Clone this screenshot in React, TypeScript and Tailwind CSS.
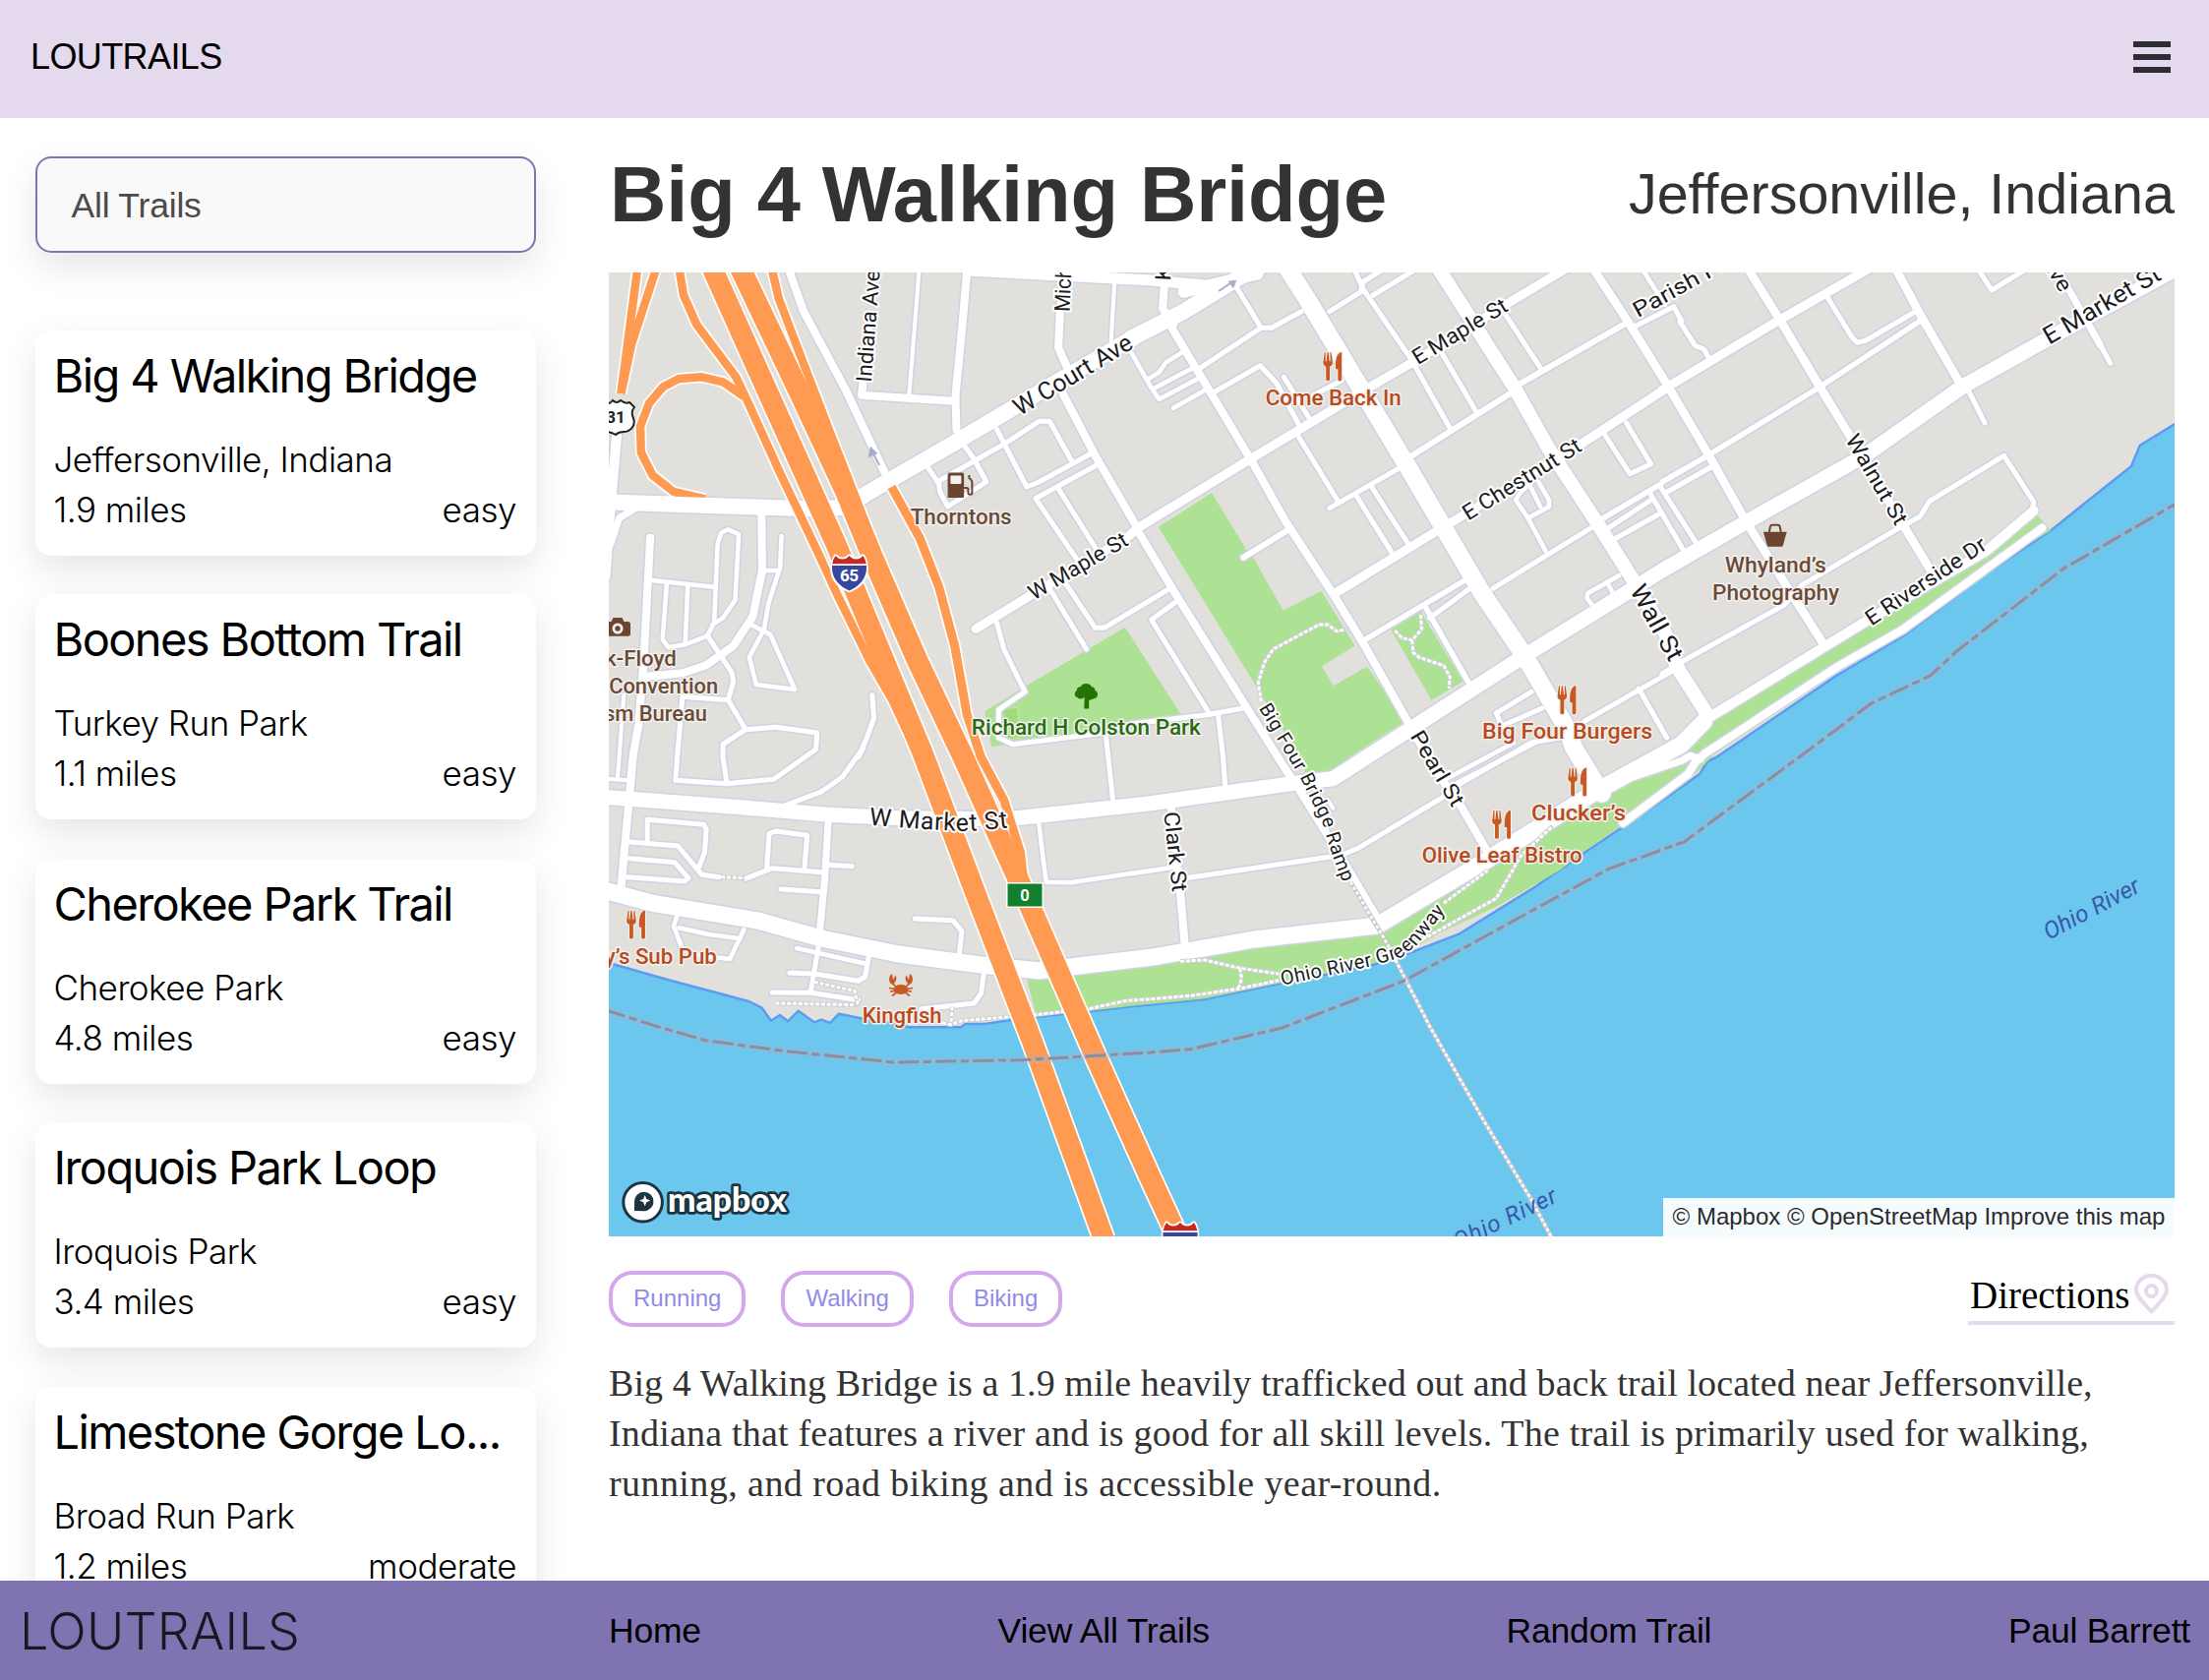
import React from "react";

/* ---------- Map geometry ----------
   Coordinates are stored per survey sheet (A-G); each sheet has its own
   origin and scale, and everything is projected to the map's own units. */
const SHEETS: Record<string, [number, number, number, number]> = {
  A: [610, 270, 2.8, 3],
  B: [1150, 270, 2.8, 3],
  C: [1690, 270, 2.82, 3],
  D: [610, 760, 2.8, 3],
  E: [1150, 760, 2.8, 3],
  F: [1690, 760, 2.82, 3],
  G: [680, 270, 3, 3],
};

type Pt = [number, number];

function project(src: string): Pt[] {
  let sheet = SHEETS.A;
  const out: Pt[] = [];
  for (const tok of src.trim().split(/\s+/)) {
    if (SHEETS[tok]) {
      sheet = SHEETS[tok];
      continue;
    }
    const [x, y] = tok.split(",").map(Number);
    out.push([sheet[0] + x / sheet[2], sheet[1] + y / sheet[3]]);
  }
  return out;
}

const toPath = (src: string) =>
  "M" + project(src).map((p) => p[0].toFixed(1) + " " + p[1].toFixed(1)).join("L");

const SHORE =
  "C 1475,480 1370,548 1345,612 1200,735 1115,808 900,960 830,1020 690,1130 500,1250 300,1395 155,1500 F 130,42 108,80 0,162 E 1285,325 1150,425 935,568 790,628 690,662 560,690 420,720 210,768 0,790 D 1395,805 1240,822 1165,832 1100,842 1040,843 1028,853 880,853 840,843 740,825 680,812 655,840 630,830 610,838 565,803 535,835 512,816 487,833 460,793 425,775 340,750 200,710 35,660 15,652";

const PARKS = [
  "A 1095,1360 1210,1285 1495,1103 1568,1225 B 145,1375 A 1440,1420 1175,1458 1115,1467",
  "B 78,797 230,693 330,870 350,895 433,1052 542,992 637,1160 543,1222 576,1282 672,1223 780,1390 620,1500 E 575,80 500,90 B 480,1500",
  "B 740,1110 825,1055 945,1268 855,1325",
  "C 1072,757 1115,808 1050,850 830,1010 690,1115 500,1240 150,1490 F 100,75 0,155 E 1285,320 1220,375 1040,485 880,565 790,622 690,658 560,688 210,766 0,788 D 1395,803 1240,808 1215,707 1568,650 E 0,650 700,555 1010,360 1350,150 1568,-10 C 0,1490 160,1375",
];

const ROADS: [number, string][] = [
  [4.5, "A 145,960 325,980"],
  [4.5, "A 190,970 178,1140 195,1165 245,1155 305,1130 325,1090 335,850 345,815 365,805 395,820 385,1020 350,1075 320,1095"],
  [4.5, "A 250,975 243,1150"],
  [4.5, "A 517,825 513,920 480,1030 467,1110 425,1195 445,1278 555,1293 485,1125 430,1095"],
  [4.5, "A 470,930 510,930"],
  [5, "A 310,1135 375,1240 380,1270 365,1325 235,1315 220,1500 D 215,100 360,110 495,97 615,5 A 618,1425 500,1408 415,1415 350,1460 350,1500 D 360,100"],
  [5, "A 365,1325 415,1415"],
  [5, "A 775,1310 780,1380 760,1440 735,1500 D 750,0 690,90 630,135 530,175"],
  [4, "A 68,1310 55,1500 D 50,95"],
  [4, "D 15,95 80,100"],
  [5, "D 135,290 135,220 295,235 303,250 298,320 280,370"],
  [5, "D 85,288 222,300 290,388 340,395"],
  [5, "D 85,338 212,350 252,398 240,408 80,395"],
  [5, "D 415,400 490,368 630,380"],
  [5, "D 475,370 482,262 500,255 590,268 582,370"],
  [5, "D 650,358 718,362"],
  [5, "D 515,432 630,440"],
  [4.5, "D 220,510 210,545 235,615 270,632 370,645 410,555"],
  [4.5, "D 225,550 310,570 400,583"],
  [5, "D 625,590 600,745"],
  [4.5, "D 560,612 760,660"],
  [5, "D 765,640 755,700 735,712 610,690 540,687"],
  [5, "D 490,747 600,748 735,770"],
  [5, "D 897,522 1005,527 1030,560 1022,640"],
  [5, "D 1092,695 1085,750 1065,780 915,797"],
  [4.5, "D 1250,235 1270,410 1340,412 1568,375 E 0,385 120,365"],
  [5, "E 165,397 600,328 650,305 890,150 930,108 1150,-15"],
  [4.5, "E 890,100 1090,-15"],
  [5, "E 930,115 B 1140,1455 1220,1440"],
  [4, "E 560,160 575,185"],
  [5, "B 1140,1300 1040,1365 1055,1405 1170,1350"],
  [5, "B 1290,1390 1568,1220 C 0,1245 70,1200 350,1035 400,975 680,800 740,765 765,720 980,580 1065,720 1062,745"],
  [5, "B 1445,1290 1525,1440"],
  [5, "A 1440,1430 1447,1500 D 1460,155"],
  [5, "B 248,1370 262,1500 E 268,120"],
  [5, "A 1130,1090 1150,1170 1210,1300 1135,1355 1135,1440 1175,1460 1440,1425 B 0,1398 215,1370 320,1350"],
  [5, "A 1280,985 1385,1170"],
  [5, "A 1320,960 1410,1105 1435,1105 1568,1020 B 110,985"],
  [5, "B 135,1020 58,1080 225,1370"],
  [5, "A 1130,500 1215,675 1250,660 1395,575"],
  [5, "A 960,660 1150,545 1250,475 1280,475 1345,600"],
  [5, "A 930,610 965,665 968,690 990,735 1100,660 1065,590 1035,545"],
  [5, "A 1360,900 1240,710 1420,605"],
  [5, "A 1305,680 1410,860"],
  [4, "A 908,20 895,200 880,395"],
  [4, "A 1465,50 1455,235"],
  [4.5, "A 1510,260 1568,370 B 80,408 190,345"],
  [4.5, "B 50,345 80,325 100,295 145,265"],
  [4.5, "B 65,375 180,310"],
  [4.5, "B 120,435 210,380"],
  [5, "B 300,65 370,190 400,190 485,140"],
  [5, "B 370,190 200,310"],
  [5, "B 230,390 368,305 415,360 480,490"],
  [5, "B 435,340 510,470"],
  [5, "B 635,10 660,70 800,290 910,500"],
  [5, "B 565,140 655,80 660,50 720,10"],
  [5, "B 690,90 820,5"],
  [5, "B 870,240 985,450"],
  [5, "B 1060,140 1170,320"],
  [5, "B 600,350 520,395"],
  [6, "B 1100,365 1410,175"],
  [6, "B 800,580 910,505 1080,390"],
  [5, "B 1435,185 1545,125 1568,170 C 50,170 95,245 120,255 135,285"],
  [4.5, "B 1455,10 1520,120"],
  [5, "B 470,510 590,720"],
  [5, "B 565,740 760,620"],
  [5, "B 640,700 745,880"],
  [5, "B 685,675 790,850"],
  [6, "B 320,890 450,805"],
  [4.5, "B 1140,660 1110,690 1095,715 1130,770 1180,870"],
  [4.5, "B 1130,770 1190,735 1190,715 1160,660"],
  [4.5, "B 1135,670 1165,735"],
  [5, "B 1030,985 1310,800"],
  [5, "B 1345,510 1420,635 1480,605 1410,480"],
  [5.5, "B 1345,770 1510,665 C 0,660 130,580 445,375 745,165"],
  [5, "B 1360,800 1480,715"],
  [5, "B 1375,835 1500,760"],
  [5, "B 1475,690 C 65,875"],
  [5, "B 1510,680 C 100,850"],
  [5, "C 15,690 140,615"],
  [5, "C 470,90 545,220 560,235 585,228 735,135"],
  [5, "C 905,10 945,75 1045,10"],
  [5, "C 1255,240 1285,298"],
  [5, "C 880,385 925,480"],
  [5.5, "B 660,1145 950,960"],
  [5.5, "B 840,1045 960,1270"],
  [5, "B 850,1075 965,985"],
  [4.5, "B 1390,945 1300,1000 1298,1015 1320,1045"],
  [4.5, "B 1355,965 1375,1005"],
  [7, "D 650,225 640,400 625,570"],
  [8, "A 460,750 462,930 435,1070 380,1160 300,1220 235,1243 120,1255"],
  [8, "A 143,830 125,1200 110,1400 D 95,20 60,430"],
  [10, "A 50,490 28,760 15,950"],
  [7, "A 100,740 55,770 30,850"],
  [8, "A 540,20 580,140 700,380 810,630"],
  [8, "A 765,200 745,395 1005,413"],
  [8, "A 1045,20 1030,200 1012,400 1015,500"],
  [8, "A 1320,60 1310,140 1305,250 1330,310"],
  [8, "B 95,60 90,130 120,180"],
  [8, "A 1320,395 1410,580 1530,800 B 20,810 120,990 330,1350 430,1520 E 480,130 590,320 700,520"],
  [8, "B 110,180 200,340 340,590 440,780 580,1010 660,1150 790,1395 E 860,60 940,180 1010,310"],
  [8, "E 115,190 140,440 153,600"],
  [9, "A 1070,1108 1220,1010 1500,830 B 20,800 340,590 480,500 680,370 810,290 1080,110 1260,-5"],
  [9, "B 580,1000 870,810 980,740 1280,545 1530,370 C 0,380 330,170 600,5"],
  [8.5, "B 1310,0 1420,180 1530,370 C 140,590 240,780 370,1000 460,1150"],
  [8.5, "C 240,0 340,170 455,375 550,540 690,790 770,930"],
  [8.5, "C 665,0 740,150 860,370"],
  [7, "C 1130,10 1170,80 1255,240"],
  [8, "C 1090,800 690,1110 500,1225 120,1490 F 95,45 75,80 0,140 E 1400,230"],
  [7, "E 1430,90 1568,40 F 80,25 110,35"],
  [10, "C 140,1375 600,1075 930,870 1065,748"],
  [11, "A 1045,15 1568,45 B 210,60"],
  [14, "B 870,0 1090,370 1190,560 1330,790 1430,960 1520,1120 C 40,1220 130,1370"],
  [18, "B 440,0 500,100 640,350 780,600 890,800 1000,1000 1120,1190 1240,1410 E 1260,0 1340,140"],
  [16, "A 50,722 400,735 600,742 700,738 760,695 1010,540 1280,368 1520,220 B 0,222 150,140 310,35 390,-10"],
  [12, "B 150,80 360,25"],
  [15, "D 0,150 150,162 400,182 650,205 850,215 1160,218 1568,170 E 270,138 470,108 575,95 B 800,1410 1120,1190 1430,985 C 0,930 245,780 580,580 860,370 1120,215 1500,-5"],
  [17, "D 0,432 150,475 450,528 630,582 850,630 1100,665 1250,680 1568,640 E 350,585 700,543 1010,345 1330,130 1568,-10 C 120,1390"],
];

const HIGHWAYS: [number, string][] = [
  [8.5, "A 108,0 60,390"],
  [8.5, "A 163,0 90,240 60,390"],
  [8.5, "G 30,0 45,90 85,180 205,340 250,435 338,630 448,860 512,1000 610,1200 A 830,1320 900,1480"],
  [8.5, "A 410,400 350,355 290,340 225,345 180,370 140,420 115,490 117,570 150,640 210,690 300,712"],
  [8.5, "G 312,0 335,100 400,270 460,425 500,530 563,690 600,790"],
  [9, "A 830,675 910,830 965,980 1010,1160 1045,1370 1085,1500 D 1150,160 1197,320 1205,400"],
  [21, "G 129,0 138,20 510,850 655,1200 A 920,1490 D 1071,450 1232,900 1435,1500"],
  [21.5, "G 215,0 224,20 405,400 540,690 622,890 756,1200 A 1030,1490 D 1190,400 1410,940 E 56,1315 140,1510"],
];

const FOOTPATHS = [
  "D 500,780 735,785",
  "D 610,715 725,742 735,790",
  "D 1003,790 1000,840",
  "D 975,840 1000,845 1030,833 1240,815 1400,795 1500,772 1568,767 E 170,757 310,735 420,710",
  "E 140,652 210,648 310,673 420,690",
  "E 310,673 315,705 305,735",
  "E 890,475 1015,375",
  "E 830,585 1040,460 1110,330 1200,240",
  "B 370,1330 362,1270 380,1210 405,1170 535,1095 560,1095 585,1115 610,1110",
  "B 825,1065 827,1110 800,1143 770,1135 750,1112",
  "B 800,1143 803,1180 820,1195 890,1220 908,1255 905,1290",
  "D 345,395 415,398",
];

const BRIDGE = "E 625,410 730,600 850,850 1000,1130 1140,1380 1200,1500";

const BORDER =
  "D 15,800 160,850 300,893 520,925 835,960 1200,953 1568,930 E 170,920 430,855 780,710 1120,510 1360,370 1568,290 F 60,290 430,0 C 600,1335 770,1250 840,1180 1150,925 1480,722";

/* ---------- Map labels ---------- */
const STREET_LABELS: [string, string, number][] = [
  ["Indiana Ave", "A 772,357 797,15", 22],
  ["Mich", "A 1337,142 1343,6", 22],
  ["K", "B 112,47 114,3", 22],
  ["W Court Ave", "A 1195,460 1522,250", 25],
  ["W Maple St", "A 1235,1022 1508,850", 22],
  ["E Maple St", "B 816,304 1077,135", 22],
  ["E Chestnut St", "B 960,779 1287,562", 22],
  ["Parish Pl", "B 1443,160 C 185,10", 22],
  ["E Market St", "C 1110,242 1435,40", 25],
  ["Ave", "C 1085,-15 1142,85", 22],
  ["Walnut St", "C 524,530 670,797", 22],
  ["Wall St", "B 1419,990 1533,1212", 25],
  ["Pearl St", "B 793,1435 E 915,185", 22],
  ["Clark St", "E 93,198 118,442", 22],
  ["Big Four Bridge Ramp", "B 363,1350 E 425,-10 485,100 545,230 570,320 603,412", 19.5],
  ["Ohio River Greenway", "E 430,725 680,668 770,640 820,595 895,498", 20],
  ["W Market St", "D 766,236 920,249 1030,255 1090,252 1162,244", 25],
  ["E Riverside Dr", "C 600,1100 935,862", 22],
];

const WATER_LABELS: [string, string][] = [
  ["Ohio River", "F 1108,588 1375,438"],
  ["Ohio River", "E 930,1532 1217,1385"],
];

const BROWN = "#6b4b38";
const RUST = "#b84a1d";
const GREEN = "#2a6b14";

// text, anchor point (centre of the baseline), width, colour
const POI_LABELS: [string, string, number, string][] = [
  ["Come Back In", "B 576,425", 138, RUST],
  ["Thorntons", "A 1028,789", 103, BROWN],
  ["Richard H Colston Park", "A 1384,1432", 233, GREEN],
  ["Big Four Burgers", "B 1242,1442", 173, RUST],
  ["Clucker’s", "E 1274,222", 96, RUST],
  ["Olive Leaf Bistro", "E 1056,352", 163, RUST],
  ["Whyland’s", "C 325,936", 103, BROWN],
  ["Photography", "C 326,1021", 129, BROWN],
  ["k-Floyd", "A 116,1221", 73, BROWN],
  ["Convention", "A 181,1305", 111, BROWN],
  ["sm Bureau", "A 158,1390", 105, BROWN],
  ["y’s Sub Pub", "D 173,659", 114, RUST],
  ["Kingfish", "D 860,841", 81, RUST],
];

function pathLength(pts: Pt[]) {
  let len = 0;
  for (let i = 1; i < pts.length; i++) {
    len += Math.hypot(pts[i][0] - pts[i - 1][0], pts[i][1] - pts[i - 1][1]);
  }
  return len;
}

function StreetLabel({ text, src, size, id }: { text: string; src: string; size: number; id: string }) {
  const pts = project(src);
  const len = pathLength(pts);
  const halo = { stroke: "#ffffff", strokeWidth: 4, strokeLinejoin: "round" as const, paintOrder: "stroke" };
  if (pts.length === 2) {
    const angle = (Math.atan2(pts[1][1] - pts[0][1], pts[1][0] - pts[0][0]) * 180) / Math.PI;
    return (
      <text
        transform={`translate(${pts[0][0]} ${pts[0][1]}) rotate(${angle})`}
        fontSize={size}
        textLength={len}
        lengthAdjust="spacingAndGlyphs"
        fill="#1d1d1f"
        {...halo}
      >
        {text}
      </text>
    );
  }
  const extra = 1.12;
  const last = pts[pts.length - 1];
  const prev = pts[pts.length - 2];
  const tail: Pt = [prev[0] + (last[0] - prev[0]) * extra, prev[1] + (last[1] - prev[1]) * extra];
  const d = "M" + [...pts.slice(0, -1), tail].map((p) => p.join(" ")).join("L");
  return (
    <>
      <path id={id} d={d} fill="none" />
      <text fontSize={size} fill="#1d1d1f" textLength={len} {...halo}>
        <textPath href={"#" + id}>{text}</textPath>
      </text>
    </>
  );
}

function Restaurant({ at }: { at: string }) {
  const [x, y] = project(at)[0];
  return (
    <g transform={`translate(${x} ${y})`} fill="#c75a24" stroke="#f4efe9" strokeWidth="2" strokeLinejoin="round" style={{ paintOrder: "stroke" }}>
      <path d="M0 10.5 1.4 0h1l-.1 9h1L4.2 0h1.2l.9 9h1L7.2 0h1l1.4 10.5c0 2-1.2 3.2-2.9 3.9V27.500q0 1.300-1.900 1.300t-1.900-1.300V14.400C1.200 13.700 0 12.500 0 10.500z" />
      <path d="M18.800 0v27.300q0 1.500-1.900 1.500t-1.900-1.500V17h-2.300C12.300 8 13.600 0 18.800 0z" />
    </g>
  );
}

function Interstate({ x, y, label }: { x: number; y: number; label: string }) {
  const shield = "M4 0q3 3.500 7 3.500 4 0 7-3.500 3 3.500 7 3.500 4 0 7-3.500 3.500 5 3.500 13C35.500 25 27 32 18 35.500 9 32 .5 25 .5 13 .5 8 2 4 4 0z";
  return (
    <g transform={`translate(${x} ${y})`}>
      <path d={shield} fill="#fff" stroke="#fff" strokeWidth="3.500" strokeLinejoin="round" />
      <path d="M4 0q3 3.500 7 3.500 4 0 7-3.500 3 3.500 7 3.500 4 0 7-3.500 2.500 3.500 3.300 8.300H.7Q1.500 3.500 4 0z" fill="#c42a24" />
      <path d="M.5 10h35c1 13-8 21.500-17.500 25.500C8.500 31.500-.5 23 .5 10z" fill="#3747a0" />
      <text x="18" y="26" fontSize="17" fontWeight="700" textAnchor="middle" fill="#fff" textLength="19">
        {label}
      </text>
    </g>
  );
}

function TrailMap() {
  const shorePath = toPath(SHORE);
  return (
    <svg viewBox="619 277 1592 980" className="block h-[980px] w-[1592px]" fontFamily="Roboto, sans-serif">
      <rect x="619" y="277" width="1592" height="980" fill="#6bc7ee" />
      <path d={shorePath + "L610 260L2220 260Z"} fill="#e1e0dc" stroke="#5c9cf2" strokeWidth="2.500" strokeLinejoin="round" />
      {PARKS.map((p) => (
        <path key={p} d={toPath(p) + "Z"} fill="#ade294" />
      ))}
      <path d={toPath("A 1145,1352 1190,1347 1195,1440 1160,1445") + "Z"} fill="#9fdb80" stroke="#c3e39a" strokeWidth="1.500" />

      <g fill="none" strokeLinecap="round" strokeLinejoin="round">
        {ROADS.map(([w, p]) => (
          <path key={p} d={toPath(p)} stroke="#d0d3e4" strokeWidth={w + 3.2} />
        ))}
        {ROADS.map(([w, p]) => (
          <path key={p} d={toPath(p)} stroke="#ffffff" strokeWidth={w} />
        ))}
        {FOOTPATHS.map((p) => (
          <g key={p} strokeLinecap="butt">
            <path d={toPath(p)} stroke="#cfd0d4" strokeWidth="4.500" />
            <path d={toPath(p)} stroke="#ffffff" strokeWidth="2.800" strokeDasharray="4 1.800" />
          </g>
        ))}
        <g strokeLinecap="butt">
          {HIGHWAYS.map(([w, p]) => (
            <path key={p} d={toPath(p)} stroke="#ffffff" strokeWidth={w + 3.4} />
          ))}
          {HIGHWAYS.map(([w, p]) => (
            <path key={p} d={toPath(p)} stroke="#ff9a52" strokeWidth={w} />
          ))}
          {/* the surface street passes over the end of the loop ramp */}
          <path d={toPath("A 190,727 330,732")} stroke="#ffffff" strokeWidth="15.500" />
          <path d={toPath(BRIDGE)} stroke="#c9c5cf" strokeWidth="4.500" />
          <path d={toPath(BRIDGE)} stroke="#ffffff" strokeWidth="2.600" strokeDasharray="3.500 2.200" />
          <path d={toPath(BORDER)} stroke="#a5b4cc" strokeOpacity="0.350" strokeWidth="8" />
          <path d={toPath(BORDER)} stroke="#8d8d9f" strokeWidth="3" strokeDasharray="21 4.500 8 4.500" />
        </g>
      </g>

      {/* one-way arrows */}
      <g fill="#a7adc6" stroke="#a7adc6">
        <path d="M894 473l-7-14" strokeWidth="2" />
        <path d="M885 454l-2 11 9-4z" strokeWidth="0.500" />
        <path d="M1239 296l12-8" strokeWidth="2" />
        <path d="M1257 285l-8 1 5 7z" strokeWidth="0.500" />
      </g>

      <g fontWeight="400">
        {STREET_LABELS.map(([text, src, size], i) => (
          <StreetLabel key={text + i} text={text} src={src} size={size} id={"street-" + i} />
        ))}
      </g>

      {WATER_LABELS.map(([text, src]) => {
        const [a, b] = project(src);
        const angle = (Math.atan2(b[1] - a[1], b[0] - a[0]) * 180) / Math.PI;
        return (
          <text
            key={src}
            transform={`translate(${a[0]} ${a[1]}) rotate(${angle})`}
            fontSize="24"
            fontStyle="italic"
            fill="#3a57a9"
            textLength={Math.hypot(b[0] - a[0], b[1] - a[1])}
          >
            {text}
          </text>
        );
      })}

      {/* US route 31 */}
      <g transform="translate(610 406)">
        <path
          d="M4 4q5 2 9-3 4 4 8 0 5 4 9 2l5 5c-4 5-2 8-.5 13C36 28 30 33 24 33c-4 0-6 1-8 3-3-2-5-3-9-3-7-1-11-8-8-15 2-5 2-8-2-11z"
          fill="#fff"
          stroke="#222"
          strokeWidth="2"
        />
        <text x="16" y="24" fontSize="17" fontWeight="700" textAnchor="middle" fill="#222">
          31
        </text>
      </g>
      <Interstate x={845.5} y={565} label="65" />
      <Interstate x={1182} y={1243} label="65" />
      <g>
        <rect x="1023" y="897" width="38" height="26" fill="#fff" />
        <rect x="1024.500" y="898.500" width="35" height="23" fill="#12802f" />
        <text x="1042" y="915.500" fontSize="16.500" fontWeight="700" textAnchor="middle" fill="#fff" textLength="8">
          0
        </text>
      </g>

      {POI_LABELS.map(([text, src, width, color]) => {
        const [x, y] = project(src)[0];
        return (
          <text
            key={text}
            x={x - width / 2}
            y={y}
            fontSize="22"
            fontWeight="500"
            fill={color}
            stroke="#f3f1ee"
            strokeWidth="3"
            strokeLinejoin="round"
            paintOrder="stroke"
            textLength={width}
            lengthAdjust="spacingAndGlyphs"
          >
            {text}
          </text>
        );
      })}

      <Restaurant at="B 547,265" />
      <Restaurant at="B 1214,1282" />
      <Restaurant at="E 1244,62" />
      <Restaurant at="E 1028,192" />
      <Restaurant at="D 76,497" />

      {/* fuel pump */}
      <g transform="translate(963.600 480.500)">
        <path d="M2 0h12.500q2 0 2 2v23.500H0V2q0-2 2-2z" fill="#6b4531" />
        <rect x="2.800" y="3" width="11" height="8.500" rx="1" fill="#f3f1ee" />
        <path d="M16.500 15.500h2.800q1.500 0 1.500 1.800v3.200q0 1.800 2 1.800t2-1.800V10q0-2.500-3-4.500V2.500" fill="none" stroke="#6b4531" strokeWidth="2" />
      </g>
      {/* camera */}
      <g transform="translate(614 628)">
        <path d="M2 4h5.500l2-4h9l2 4h4q2.500 0 2.500 2.500v9.800q0 2.500-2.500 2.500H0V6z" fill="#6b4531" />
        <circle cx="14" cy="11" r="5.500" fill="#f3f1ee" />
        <circle cx="14" cy="11" r="2.700" fill="#6b4531" />
      </g>
      {/* basket */}
      <g transform="translate(1792.800 532.700)">
        <path d="M0 8h24l-1.500 5-2.300 8.500q-.4 1.500-2 1.500H5.800q-1.600 0-2-1.500L1.500 13z" fill="#6b4531" />
        <path d="M6 8l1.200-5.500Q7.500 1 9 1h6q1.500 0 1.800 1.500L18 8" fill="none" stroke="#6b4531" strokeWidth="2" />
      </g>
      {/* tree */}
      <g transform="translate(1092.800 695)" fill="#237404">
        <path d="M11.500 0q4 0 5.500 3.200 3.500.3 3.500 3.500 3 1.500 2.700 4.500-.4 3.800-4.700 4.300-3 2-6-.3L9.500 14Q6 17 2.500 14-1 12.500.3 9 1 7.500 2 7q0-3.500 4-3.800Q7.500 0 11.500 0z" />
        <path d="M10 12h3.500l.5 3 3-2 .8 1-3.500 3.500.2 8H9.500z" />
      </g>
      {/* crab */}
      <g transform="translate(903.500 990)" stroke="#c75a24" fill="none" strokeWidth="1.600">
        <ellipse cx="12.500" cy="16" rx="7.500" ry="5" fill="#c75a24" stroke="none" />
        <path d="M7.500 13 3.500 9.500M17.500 13l4-3.500M6.500 15.500l-6-1M6.500 17.500l-5 .5M8 19l-4.500 3.500M18.500 15.500l6-1M18.500 17.500l5 .5M17 19l4.500 3.500" />
        <path d="M3.500 0Q-.5 3 .8 7.500 1.800 11 5.800 11.500L6 9q3-2.500 1.200-7.500L4.500 6z" fill="#c75a24" stroke="none" />
        <path d="M21.500 0q4 3 2.700 7.500-1 3.500-5 4L19 9q-3-2.500-1.200-7.500L20.500 6z" fill="#c75a24" stroke="none" />
      </g>

      {/* Mapbox wordmark */}
      <g>
        <circle cx="653.600" cy="1222.200" r="19.800" fill="#fff" stroke="#1c3540" strokeWidth="3" />
        <path d="M645 1231v-9a9.800 9.800 0 0 1 9.800-10.200 9.600 9.600 0 0 1 9.600 9.600 9.800 9.800 0 0 1-10.400 9.800z" fill="#1c3540" />
        <path d="M655.700 1215l1.600 4 4 1.600-4 1.600-1.600 4-1.600-4-4-1.600 4-1.600z" fill="#fff" />
        <text
          x="679"
          y="1231.500"
          fontFamily="Lato, sans-serif"
          fontWeight="900"
          fontSize="34"
          fill="#fff"
          stroke="#1c3540"
          strokeWidth="5.500"
          strokeLinejoin="round"
          paintOrder="stroke"
          textLength="121"
          lengthAdjust="spacingAndGlyphs"
        >
          mapbox
        </text>
      </g>
    </svg>
  );
}

/* ---------- Sidebar ---------- */
const TRAILS = [
  { name: "Big 4 Walking Bridge", place: "Jeffersonville, Indiana", miles: "1.9 miles", level: "easy" },
  { name: "Boones Bottom Trail", place: "Turkey Run Park", miles: "1.1 miles", level: "easy" },
  { name: "Cherokee Park Trail", place: "Cherokee Park", miles: "4.8 miles", level: "easy" },
  { name: "Iroquois Park Loop", place: "Iroquois Park", miles: "3.4 miles", level: "easy" },
  { name: "Limestone Gorge Lo...", place: "Broad Run Park", miles: "1.2 miles", level: "moderate" },
];

function TrailCard({ name, place, miles, level }: (typeof TRAILS)[number]) {
  return (
    <article className="h-[229px] shrink-0 rounded-2xl bg-white pl-[19px] pr-5 shadow-[0_14px_36px_rgba(0,0,0,0.1)]">
      <h2 className="whitespace-nowrap pt-[16px] font-[Inter,sans-serif] text-[47px] leading-[60px] tracking-[-1.6px] text-black">
        {name}
      </h2>
      <div className="mt-[30px] font-[Inter,sans-serif] text-[35px] font-light leading-[51px] tracking-[-0.5px] text-black">
        <p>{place}</p>
        <p className="flex justify-between">
          <span>{miles}</span>
          <span>{level}</span>
        </p>
      </div>
    </article>
  );
}

const TAGS = ["Running", "Walking", "Biking"];
const LINKS = ["Home", "View All Trails", "Random Trail", "Paul Barrett"];

export default function App() {
  return (
    <div className="flex h-[1708px] w-[2246px] flex-col overflow-hidden bg-white font-['Liberation_Sans',Arial,sans-serif]">
      <header className="flex h-[119.500px] shrink-0 items-center justify-between bg-[#e5d9ed] pb-[3px] pl-[31px] pr-[39px]">
        <span className="text-[36px] tracking-[-0.6px] text-black">LOUTRAILS</span>
        <button className="flex w-[38px] flex-col gap-[7px]" aria-label="Menu">
          <span className="h-[6px] bg-[#2f2d32]" />
          <span className="h-[6px] bg-[#2f2d32]" />
          <span className="h-[6px] bg-[#2f2d32]" />
        </button>
      </header>

      <div className="flex min-h-0 flex-1 overflow-hidden">
        <aside className="flex w-[619px] shrink-0 flex-col pl-[35.500px] pr-[74px] pt-[39.500px]">
          <div className="mb-[78.500px] flex h-[98px] shrink-0 items-center rounded-2xl border-2 border-[#7f74b1] bg-[#f9f9f9] px-[35px] pt-[4px] text-[35.500px] tracking-[-0.2px] text-[#4a4a4a] shadow-[0_14px_36px_rgba(0,0,0,0.1)]">
            All Trails
          </div>
          <div className="flex flex-col gap-[39.500px]">
            {TRAILS.map((t) => (
              <TrailCard key={t.name} {...t} />
            ))}
          </div>
        </aside>

        <main className="w-[1592px] shrink-0">
          <div className="flex h-[157px] items-center justify-between whitespace-nowrap text-[#333]">
            <h1 className="pl-px text-[79.500px] font-bold leading-none tracking-[-0.1px]">Big 4 Walking Bridge</h1>
            <p className="text-[57.500px] leading-none">Jeffersonville, Indiana</p>
          </div>

          <div className="relative h-[980px] overflow-hidden">
            <TrailMap />
            <div className="absolute bottom-0 right-0 flex h-[39px] w-[520px] items-center justify-center whitespace-nowrap bg-[#f6fbfe] text-[24px] text-[#2b2b2b]">
              © Mapbox © OpenStreetMap Improve this map
            </div>
          </div>

          <div className="mt-[35px] flex items-start justify-between">
            <div className="flex gap-9">
              {TAGS.map((t) => (
                <span
                  key={t}
                  className="flex h-[57px] items-center rounded-3xl border-4 border-[#d3a9ec] px-[21px] text-[24px] text-[#8f8ce8]"
                >
                  {t}
                </span>
              ))}
            </div>
            <a className="flex h-[55px] w-[210px] items-start justify-between border-b-4 border-[#e5d9ed] pl-[2px] pr-[6px] font-['Liberation_Serif',serif] text-[39px] leading-[49px] text-black">
              Directions
              <svg viewBox="0 0 35 41" className="mt-[3px] h-[41px] w-[35px]" fill="none" stroke="#e5d9ed" strokeWidth="4">
                <path d="M17.500 38.500C11 31 2 23.500 2 16.500a15.500 14.800 0 0 1 31 0c0 7-9 14.500-15.500 22z" strokeLinejoin="round" />
                <circle cx="17.500" cy="17.500" r="5.500" />
              </svg>
            </a>
          </div>

          <p className="mt-[32px] flex flex-col whitespace-nowrap font-['Liberation_Serif',serif] text-[38px] leading-[51px] text-[#333]">
            <span className="tracking-[0.090px]">
              Big 4 Walking Bridge is a 1.9 mile heavily trafficked out and back trail located near Jeffersonville,
            </span>
            <span className="tracking-[0.190px]">
              Indiana that features a river and is good for all skill levels. The trail is primarily used for walking,
            </span>
            <span className="tracking-[0.430px]">running, and road biking and is accessible year-round.</span>
          </p>
        </main>
      </div>

      <footer className="flex h-[101px] shrink-0 items-center bg-[#7f74b1] pr-[19px] text-black">
        <span className="w-[619px] pl-[20px] pt-[2px] font-[Inter,sans-serif] text-[52px] font-light tracking-[0.300px] text-[#1a1722]">
          LOUTRAILS
        </span>
        <nav className="flex flex-1 justify-between pt-[3px] text-[35.500px] tracking-[-0.2px]">
          {LINKS.map((l) => (
            <a key={l}>{l}</a>
          ))}
        </nav>
      </footer>
    </div>
  );
}
